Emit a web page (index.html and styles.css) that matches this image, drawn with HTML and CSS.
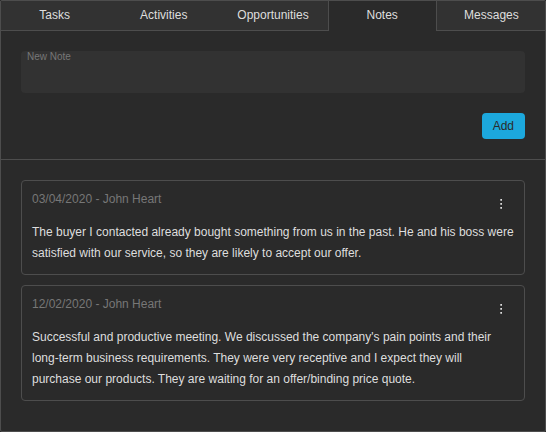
FILE: index.html
```html
<!DOCTYPE html>
<html lang="en">
<head>
<meta charset="utf-8">
<meta name="viewport" content="width=device-width, initial-scale=1">
<title>Notes</title>
<link rel="stylesheet" href="styles.css">
</head>
<body>
<main class="panel">
  <nav class="tabs" role="tablist">
    <button class="tab" type="button" role="tab" aria-selected="false">Tasks</button>
    <button class="tab" type="button" role="tab" aria-selected="false">Activities</button>
    <button class="tab" type="button" role="tab" aria-selected="false">Opportunities</button>
    <button class="tab tab-active" type="button" role="tab" aria-selected="true">Notes</button>
    <button class="tab" type="button" role="tab" aria-selected="false">Messages</button>
  </nav>
  <form class="composer">
    <div class="field">
      <label class="field-label" for="note">New Note</label>
      <textarea class="field-input" id="note" rows="1"></textarea>
    </div>
    <button class="add" type="button">Add</button>
  </form>
  <section class="notes">
    <article class="note">
      <header class="note-head">
        <span>03/04/2020 - John Heart</span>
        <button class="more" type="button" aria-label="More">
          <svg width="18" height="18" viewBox="0 0 18 18" aria-hidden="true"><path d="M8.3 4H10v1.8H8.3zM8.3 8H10v1.8H8.3zM8.3 12H10v1.8H8.3z"/></svg>
        </button>
      </header>
      <p class="note-text">The buyer I contacted already bought something from us in the past. He and his boss were satisfied with our service, so they are likely to accept our offer.</p>
    </article>
    <article class="note">
      <header class="note-head">
        <span>12/02/2020 - John Heart</span>
        <button class="more" type="button" aria-label="More">
          <svg width="18" height="18" viewBox="0 0 18 18" aria-hidden="true"><path d="M8.3 4H10v1.8H8.3zM8.3 8H10v1.8H8.3zM8.3 12H10v1.8H8.3z"/></svg>
        </button>
      </header>
      <p class="note-text">Successful and productive meeting. We discussed the company's pain points and their long-term business requirements. They were very receptive and I expect they will purchase our products. They are waiting for an offer/binding price quote.</p>
    </article>
  </section>
</main>
</body>
</html>
```
FILE: styles.css
```css
* {
  box-sizing: border-box;
}

body {
  margin: 0;
  background: #2a2a2a;
  color: #dedede;
  font: 12px/16px "Liberation Sans", Arial, sans-serif;
}

button,
textarea {
  margin: 0;
  padding: 0;
  border: 0;
  background: none;
  color: inherit;
  font: inherit;
}

.panel {
  min-height: 100vh;
  border: 1px solid #4d4d4d;
  border-radius: 2px;
}

/* The tab strip runs over the panel's side borders; the end tabs redraw them. */
.tabs {
  display: grid;
  grid-template-columns: repeat(5, 1fr);
  margin: 0 -1px;
}

.tab {
  height: 30px;
  padding-bottom: 2px;
  border-bottom: 1px solid #4d4d4d;
  background: #323232;
}

.tab:first-child {
  box-shadow: inset 1px 0 #4d4d4d;
}

.tab:last-child {
  box-shadow: inset -1px 0 #4d4d4d;
}

.tab-active {
  padding-bottom: 3px;
  border: 1px solid #4d4d4d;
  border-width: 0 1px;
  background: #2a2a2a;
}

.composer {
  display: flex;
  flex-direction: column;
  align-items: flex-end;
  gap: 20px;
  padding: 20px;
  border-bottom: 1px solid #4d4d4d;
}

.field {
  display: flex;
  flex-direction: column;
  width: 100%;
  padding: 0 6px 6px;
  border-radius: 4px;
  background: #323232;
}

.field-label {
  color: #777;
  font-size: 10px;
  line-height: 12px;
}

.field-input {
  height: 24px;
  resize: none;
  outline: 0;
}

.add {
  padding: 5px 11px;
  border-radius: 4px;
  background: #1ca8dd;
  color: #2a2a2a;
}

.notes {
  display: grid;
  gap: 10px;
  padding: 20px;
}

.note {
  padding: 10px;
  border: 1px solid #4d4d4d;
  border-radius: 4px;
}

.note-head {
  display: flex;
  justify-content: space-between;
  margin-bottom: 5px;
  color: #777;
}

.more {
  display: grid;
  place-items: center;
  width: 26px;
  height: 26px;
  color: #dedede;
}

.more svg {
  fill: currentColor;
}

.note-text {
  margin: 0;
  line-height: 21px;
}
```
